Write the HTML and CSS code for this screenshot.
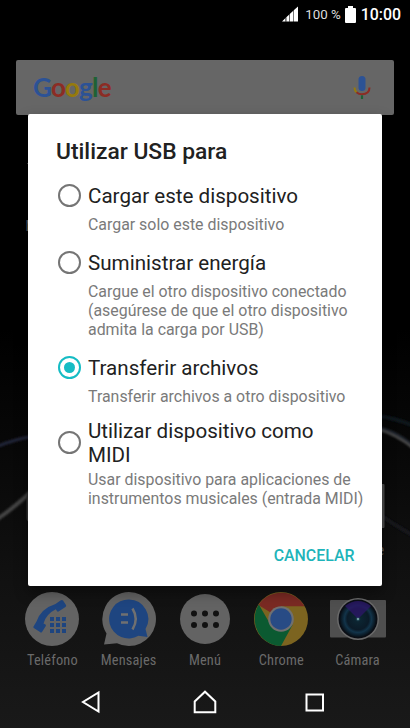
FILE: index.html
```html
<!DOCTYPE html>
<html lang="es">
<head>
    <meta charset="UTF-8">
    <meta name="viewport" content="width=device-width, initial-scale=1.0">
    <title>Utilizar USB para</title>
    <link rel="stylesheet" href="styles.css">
</head>
<body>
    <div class="phone">
        <!-- Wallpaper -->
        <svg class="wallpaper" width="410" height="728" viewBox="0 0 410 728">
            <defs>
                <linearGradient id="sky" x1="0" y1="0" x2="0" y2="1">
                    <stop offset="0.45" stop-color="#000"/>
                    <stop offset="0.62" stop-color="#080808"/>
                    <stop offset="0.8" stop-color="#111"/>
                    <stop offset="1" stop-color="#191919"/>
                </linearGradient>
                <filter id="soft"><feGaussianBlur stdDeviation="0.8"/></filter>
            </defs>
            <rect width="410" height="728" fill="url(#sky)"/>
            <g fill="none" filter="url(#soft)">
                <path d="M-4 447Q12 440 34 436" stroke="#22263a" stroke-width="3"/>
                <path d="M-4 520Q14 508 34 489" stroke="#454545" stroke-width="4"/>
                <path d="M376 427Q394 430 414 446" stroke="#2a303c" stroke-width="2"/>
                <path d="M376 429Q396 434 414 449" stroke="#666" stroke-width="1.5"/>
                <path d="M376 416Q396 418 414 426" stroke="#10151c" stroke-width="4"/>
                <path d="M376 512Q394 525 414 536" stroke="#15171e" stroke-width="4"/>
            </g>
            <rect x="26.5" y="492" width="10" height="30" rx="4" fill="#333"/>
            <rect x="360" y="484" width="24.5" height="44" rx="1" fill="#4c4c4c"/>
            <rect x="27" y="163" width="4" height="1" fill="#444"/>
            <text class="hidden-label" x="25.5" y="231">M</text>
            <text class="hidden-label" x="377.5" y="555">e</text>
        </svg>

        <header class="status-bar">
            <svg class="signal" width="17" height="16" viewBox="0 0 17 16">
                <path d="M0 15.5L3.5 12v3.500zM4.300 11.300L7.300 8.500v7H4.300z" fill="#fff"/>
                <path d="M8 7.800L11 5v10.500H8zM12 4L16 .5v15h-4z" fill="#fff"/>
                <path d="M3.500 12l.8-.7v4.200h-.8zM7.300 8.500l.7-.7v7.700h-.7zM11 5l1-1v11.500h-1z" fill="#777"/>
            </svg>
            <span class="percent">100 %</span>
            <svg class="battery" width="11" height="17" viewBox="0 0 11 17">
                <path d="M3 0h5v2h2q1 0 1 1v13q0 1-1 1H1q-1 0-1-1V3q0-1 1-1h2z" fill="#fff"/>
            </svg>
            <span class="clock">10:00</span>
        </header>

        <div class="search-bar">
            <div class="google"><span class="blue">G</span><span class="red">o</span><span class="yellow">o</span><span class="blue">g</span><span class="green">l</span><span class="red">e</span></div>
            <svg width="18" height="25" viewBox="0 0 18 25">
                <rect x="5.5" y="1" width="7" height="15" rx="3.5" fill="#2c5295"/>
                <path d="M1.500 12.500q0 3 2.200 5" fill="none" stroke="#967a0c" stroke-width="2"/>
                <path d="M3.500 17.200Q5.800 19.300 9 19.300q7.500-.3 7.500-6.800" fill="none" stroke="#8c2c24" stroke-width="2"/>
                <path d="M9 20.300V24" stroke="#1e6234" stroke-width="2.2"/>
            </svg>
        </div>

        <div class="dock">
            <div class="app">
                <svg width="56" height="56" viewBox="0 0 56 56">
                    <circle cx="28" cy="28" r="27" fill="#636363"/>
                    <path d="M31.5 13L36.500 9.500Q38 8.500 39 9.500L42 14Q42.500 15 41.500 16L34.500 20.500Q33.500 21 33 20L31.800 18.200Q22 23 19.500 32.500L21.500 33.500Q22.200 34.200 21.800 35L18 41Q17 42 16 41L9.800 37Q9 36.300 9.500 35.500L12.500 30.500Q17 17.500 31.500 13z" fill="#1e4580"/>
                    <path d="M26 26h4v4h-4zM32 26h4v4h-4zM38 26h4v4h-4zM26 32h4v4h-4zM32 32h4v4h-4zM38 32h4v4h-4zM26 38h4v4h-4zM32 38h4v4h-4zM38 38h4v4h-4z" fill="#1e4580"/>
                </svg>
                <span>Teléfono</span>
            </div>
            <div class="app">
                <svg width="56" height="56" viewBox="0 0 56 56">
                    <path d="M28 1a27 27 0 1 1-12 51.200L3 53.500 5.500 42.500A27 27 0 0 1 28 1z" fill="#636363"/>
                    <path d="M28 8.500A19.500 19.500 0 0 1 44.500 38L46.500 46 37.500 44.800A19.500 19.500 0 1 1 28 8.500z" fill="#1e4580"/>
                    <path d="M20 23.500h7M20 31.500h7M31.500 17.500q6.500 10.500 0 21" fill="none" stroke="#707070" stroke-width="2.5"/>
                </svg>
                <span>Mensajes</span>
            </div>
            <div class="app">
                <svg width="56" height="56" viewBox="0 0 56 56">
                    <circle cx="28" cy="28" r="25" fill="#636363"/>
                    <g fill="#111">
                        <circle cx="17" cy="22.5" r="3"/><circle cx="28" cy="22.5" r="3"/><circle cx="39" cy="22.5" r="3"/>
                        <circle cx="17" cy="34" r="3"/><circle cx="28" cy="34" r="3"/><circle cx="39" cy="34" r="3"/>
                    </g>
                </svg>
                <span>Menú</span>
            </div>
            <div class="app">
                <svg width="56" height="56" viewBox="0 0 56 56">
                    <circle cx="28" cy="28" r="27" fill="#7c6420"/>
                    <path d="M28 28L5.500 14A27 27 0 0 1 51.500 15.300H28z" fill="#7a2a23"/>
                    <path d="M5.800 13.600A27 27 0 0 0 28 55L39.500 34 28 28 16.500 32z" fill="#0b5a31"/>
                    <circle cx="28" cy="28" r="12.8" fill="#707070"/>
                    <circle cx="28" cy="28" r="10.7" fill="#284b85"/>
                </svg>
                <span>Chrome</span>
            </div>
            <div class="app">
                <svg width="56" height="56" viewBox="0 0 56 56">
                    <defs>
                        <radialGradient id="lens">
                            <stop offset="0" stop-color="#2a5a68"/>
                            <stop offset="0.15" stop-color="#0c2532"/>
                            <stop offset="0.6" stop-color="#0b1b28"/>
                            <stop offset="0.75" stop-color="#12344a"/>
                            <stop offset="1" stop-color="#081119"/>
                        </radialGradient>
                    </defs>
                    <rect x="0" y="9" width="56" height="37.5" rx="1" fill="#4f4f4f"/>
                    <circle cx="28" cy="28" r="21" fill="#6a6a6a"/>
                    <circle cx="28" cy="28" r="19.5" fill="#0a0d14"/>
                    <circle cx="28" cy="28" r="18" fill="url(#lens)"/>
                    <path d="M28 28L15 15Q28 5 41 15z" fill="#2a1765" opacity="0.8"/>
                    <circle cx="28" cy="28" r="1.2" fill="#6f9ba0"/>
                </svg>
                <span>Cámara</span>
            </div>
        </div>

        <nav class="nav-bar">
            <svg class="back" width="24" height="24" viewBox="0 0 24 24"><path d="M19.500 2.500v19L4 12z"/></svg>
            <svg width="24" height="24" viewBox="0 0 24 24"><path d="M1.700 22.200V11.500L12 1.700l10.300 9.800v10.700z"/></svg>
            <svg width="24" height="24" viewBox="0 0 24 24"><path d="M3.500 4.500H20v16H3.500z"/></svg>
        </nav>

        <!-- USB dialog -->
        <div class="dialog">
            <h1>Utilizar USB para</h1>
            <div class="option">
                <div class="option-head"><i class="radio"></i><h2>Cargar este dispositivo</h2></div>
                <p>Cargar solo este dispositivo</p>
            </div>
            <div class="option">
                <div class="option-head"><i class="radio"></i><h2>Suministrar energía</h2></div>
                <p>Cargue el otro dispositivo conectado<br>(asegúrese de que el otro dispositivo<br>admita la carga por USB)</p>
            </div>
            <div class="option">
                <div class="option-head"><i class="radio checked"></i><h2>Transferir archivos</h2></div>
                <p>Transferir archivos a otro dispositivo</p>
            </div>
            <div class="option">
                <div class="option-head"><i class="radio"></i><h2>Utilizar dispositivo como<br>MIDI</h2></div>
                <p>Usar dispositivo para aplicaciones de<br>instrumentos musicales (entrada MIDI)</p>
            </div>
            <button class="cancel">CANCELAR</button>
        </div>
    </div>
</body>
</html>
```
FILE: styles.css
```css
body {
    margin: 0;
    background: #000;
    font-family: Roboto, "Liberation Sans", sans-serif;
}

h1, h2, p {
    margin: 0;
    font-weight: normal;
}

.phone {
    position: relative;
    display: flex;
    flex-direction: column;
    width: 410px;
    height: 728px;
    overflow: hidden;
}

.wallpaper {
    position: absolute;
    top: 0;
    left: 0;
}

.hidden-label {
    font-family: "Roboto Condensed", Roboto, sans-serif;
    font-size: 14px;
    fill: #666;
}

/* Status bar */
.status-bar {
    position: relative;
    display: flex;
    align-items: center;
    justify-content: flex-end;
    height: 28px;
    padding-right: 9px;
    color: #fff;
}

.percent {
    margin: 1px 4px 0 6px;
    font-size: 13.3px;
    color: #ddd;
}

.battery {
    margin-right: 5px;
}

.clock {
    margin-top: 1px;
    font-size: 15.9px;
    font-weight: 500;
}

/* Search */
.search-bar {
    position: relative;
    display: flex;
    justify-content: space-between;
    align-items: center;
    box-sizing: border-box;
    height: 55px;
    margin: 32px 16px 0;
    padding: 0 23px 0 17px;
    border-radius: 2px;
    background: #666;
}

.google {
    font-family: Lato, sans-serif;
    font-size: 26px;
    font-weight: bold;
    line-height: 30px;
    letter-spacing: -0.8px;
    padding-bottom: 2px;
}

.blue { color: #2c5295; }
.red { color: #8c2c24; }
.yellow { color: #967a0c; }
.green { color: #1e6234; }

/* Dock */
.dock {
    position: relative;
    display: grid;
    grid-template-columns: repeat(5, 76.3px);
    justify-content: center;
    margin-top: auto;
    height: 85px;
}

.app {
    display: flex;
    flex-direction: column;
    align-items: center;
}

.app span {
    margin-top: 5px;
    font-family: "Roboto Condensed", Roboto, sans-serif;
    font-size: 14.4px;
    line-height: 17px;
    letter-spacing: 0.15px;
    color: #6a6a6a;
}

.nav-bar {
    position: relative;
    display: flex;
    justify-content: center;
    align-items: center;
    gap: 85.5px;
    height: 52px;
}

.nav-bar path {
    fill: none;
    stroke: #fff;
    stroke-width: 2;
}

.nav-bar .back {
    margin: 0 5px 0 -5px;
}

/* Dialog */
.dialog {
    position: absolute;
    top: 114px;
    left: 28px;
    display: flex;
    flex-direction: column;
    box-sizing: border-box;
    width: 353.5px;
    height: 472px;
    padding: 24px 14px 16px 28px;
    border-radius: 2px;
    background: #fff;
    box-shadow: 0 6px 14px rgba(0, 0, 0, 0.4);
}

.dialog h1 {
    margin-bottom: 10.3px;
    font-size: 22.8px;
    font-weight: 500;
    line-height: 27px;
    color: #212121;
}

.option {
    margin-bottom: 7.7px;
}

.option-head {
    display: flex;
    align-items: center;
    box-sizing: border-box;
    min-height: 40.8px;
    padding: 4px 0;
}

.option h2 {
    padding-top: 1px;
    font-size: 20.6px;
    line-height: 24px;
    color: #212121;
}

.option p {
    padding-left: 32px;
    font-size: 15.9px;
    line-height: 18.66px;
    color: #7a7a7a;
    white-space: nowrap;
}

.radio {
    display: flex;
    flex: none;
    box-sizing: border-box;
    width: 23px;
    height: 23px;
    margin: 0 7px 0 2px;
    border: 2px solid #757575;
    border-radius: 50%;
}

.radio.checked {
    border-color: #15bcc4;
}

.radio.checked::after {
    content: "";
    width: 11px;
    height: 11px;
    margin: auto;
    border-radius: 50%;
    background: #15bcc4;
}

.cancel {
    align-self: flex-end;
    margin: auto 13px 5px 0;
    padding: 0;
    border: none;
    background: none;
    font-family: inherit;
    font-size: 15.9px;
    font-weight: 500;
    line-height: 19px;
    color: #1eb4ba;
}
```
